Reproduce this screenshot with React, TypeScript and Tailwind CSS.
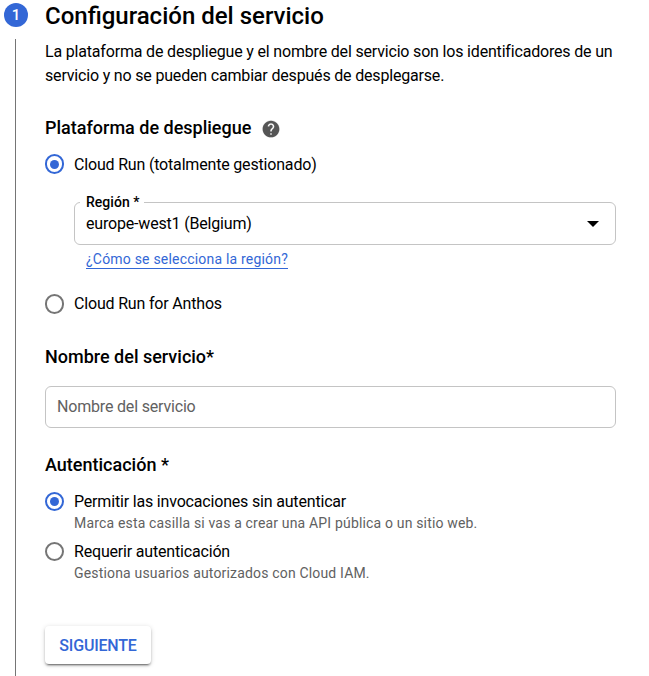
import React from "react";

function Radio({ on, tall }: { on?: boolean; tall?: boolean }) {
  return (
    <span className={`flex w-[19px] shrink-0 items-center justify-center rounded-full border-2 ${tall ? "h-5" : "mt-px h-[19px]"} ${on ? "border-[#3367d6]" : "border-[#757575]"}`}>
      {on && <span className="h-[9px] w-[9px] rounded-full bg-[#3367d6]" />}
    </span>
  );
}

export default function App() {
  return (
    <main className="flex h-[676px] w-[649px] overflow-hidden bg-white font-['Roboto',sans-serif] text-[16px] leading-6 tracking-[-0.18px] text-black">
      <aside className="flex w-[45px] shrink-0 flex-col pl-1 pt-[3px]">
        <span className="flex h-6 w-6 items-center justify-center rounded-full bg-[#3367d6] text-[15px] font-medium tracking-normal text-white">1</span>
        <span className="ml-[11px] mt-3 w-px flex-1 bg-[#757575]" />
      </aside>
      <div className="flex w-[571px] flex-col items-start">
        <h1 className="h-8 whitespace-nowrap text-[24px] font-medium leading-8 tracking-normal">Configuración del servicio</h1>
        <p className="mt-2 whitespace-nowrap">La plataforma de despliegue y el nombre del servicio son los identificadores de un<br />servicio y no se pueden cambiar después de desplegarse.</p>
        <div className="mt-7 flex h-6 items-center gap-[10px]">
          <h2 className="text-[18px] font-medium tracking-normal">Plataforma de despliegue</h2>
          <svg className="mt-px h-5 w-5" viewBox="0 0 24 24" fill="#555555"><path d="M12 2C6.48 2 2 6.48 2 12s4.48 10 10 10 10-4.48 10-10S17.52 2 12 2zm1 17h-2v-2h2v2zm2.07-7.75l-.9.92C13.45 12.9 13 13.5 13 15h-2v-.5c0-1.1.45-2.1 1.17-2.83l1.24-1.26c.37-.36.59-.86.59-1.41 0-1.1-.9-2-2-2s-2 .9-2 2H8c0-2.21 1.79-4 4-4s4 1.79 4 4c0 .88-.36 1.68-.93 2.25z" stroke="#555555" strokeWidth="0.2" /></svg>
        </div>
        <label className="mt-3 flex h-6 items-center gap-[10px]"><Radio on tall /><span className="pt-0.5">Cloud Run (totalmente gestionado)</span></label>
        <fieldset className="ml-[29px] mt-[18px] h-[51px] w-[542px] rounded-[6px] border border-[#c4c4c4] px-[11px]">
          <legend className="-ml-[6px] h-4 pl-[6px] pr-[5px] text-[14px] font-medium leading-4 tracking-[0.03px]">Región *</legend>
          <div className="flex h-7 items-center justify-between pr-[5px]"><span>europe-west1 (Belgium)</span><svg width="12" height="6" viewBox="0 0 12 6"><path d="M0 0h12L6 6z" /></svg></div>
        </fieldset>
        <a className="ml-[41px] mt-[5px] h-[19px] whitespace-nowrap border-b border-[#3367d6] text-[14px] leading-[19px] tracking-[0.2px] text-[#3367d6]">¿Cómo se selecciona la región?</a>
        <label className="mt-[23px] flex h-6 items-center gap-[10px]"><Radio tall /><span>Cloud Run for Anthos</span></label>
        <h2 className="mt-[29px] text-[18px] font-medium tracking-normal">Nombre del servicio*</h2>
        <div className="mt-[17px] flex h-[42px] w-[571px] items-center rounded-[6px] border border-[#c4c4c4] px-[11px] text-[#616161]">Nombre del servicio</div>
        <h2 className="mt-[25px] text-[18px] font-medium tracking-normal">Autenticación *</h2>
        <label className="mt-3 flex h-6 items-center gap-[10px]"><Radio on /><span className="pt-0.5">Permitir las invocaciones sin autenticar</span></label>
        <p className="ml-[29px] h-5 whitespace-nowrap text-[14px] leading-5 tracking-[0.17px] text-[#616161]">Marca esta casilla si vas a crear una API pública o un sitio web.</p>
        <label className="mt-[6px] flex h-6 items-center gap-[10px]"><Radio /><span className="pt-0.5">Requerir autenticación</span></label>
        <p className="ml-[29px] h-5 whitespace-nowrap text-[14px] leading-5 tracking-[0.17px] text-[#616161]">Gestiona usuarios autorizados con Cloud IAM.</p>
        <button className="mt-[43px] h-[38px] w-[106px] rounded bg-white pt-0.5 text-[16px] font-medium tracking-[-0.2px] text-[#3367d6] shadow-[0_3px_1px_-2px_rgba(0,0,0,0.3),0_2px_2px_0_rgba(0,0,0,0.22),0_1px_5px_0_rgba(0,0,0,0.16)]">SIGUIENTE</button>
      </div>
    </main>
  );
}
